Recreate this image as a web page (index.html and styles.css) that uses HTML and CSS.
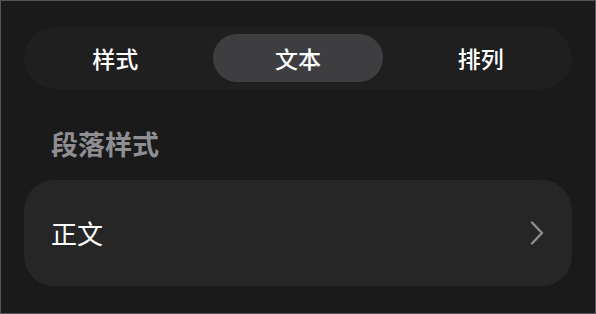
FILE: index.html
```html
<!DOCTYPE html>
<html lang="zh-CN">
<head>
<meta charset="utf-8">
<link rel="stylesheet" href="styles.css">
</head>
<body>
<div class="frame">
  <div class="segmented">
    <div class="tab">样式</div>
    <div class="tab active">文本</div>
    <div class="tab">排列</div>
  </div>
  <div class="section-title">段落样式</div>
  <div class="row">
    <span class="row-label">正文</span>
    <svg class="chevron" width="14" height="24" viewBox="0 0 14 24" aria-hidden="true">
      <path d="M2 1.5 L12 12 L2 22.5" fill="none" stroke="#8e8e93" stroke-width="2.4" stroke-linecap="round" stroke-linejoin="round"/>
    </svg>
  </div>
</div>
</body>
</html>
```
FILE: styles.css
```css
html, body {
  margin: 0;
  padding: 0;
  background: #1a1a1b;
}
.frame {
  box-sizing: border-box;
  width: 596px;
  height: 314px;
  border: 1px solid #555557;
  background: #1a1a1b;
  padding: 26px 23px 0 23px;
  font-family: "Noto Sans CJK SC", "Noto Sans", sans-serif;
  color: #ffffff;
}
.segmented {
  display: grid;
  grid-template-columns: repeat(3, 1fr);
  padding: 7px 0;
  height: 48px;
  border-radius: 31px;
  background: #1f1f20;
}
.tab {
  margin: 0 6px;
  height: 48px;
  border-radius: 24px;
  display: flex;
  align-items: center;
  justify-content: center;
  font-size: 23px;
  font-weight: 500;
  line-height: 1;
  color: #ffffff;
}
.tab.active {
  background: #3e3e40;
}
.section-title {
  margin-top: 41px;
  padding-left: 27px;
  font-size: 27px;
  line-height: 28px;
  font-weight: 600;
  color: #8e8e93;
}
.row {
  margin-top: 22px;
  height: 106px;
  border-radius: 30px;
  background: #262627;
  display: flex;
  align-items: center;
  justify-content: space-between;
  padding: 0 27px 0 27px;
}
.row-label {
  font-size: 26px;
  line-height: 1;
  font-weight: 400;
  color: #ffffff;
}
.chevron {
  display: block;
  margin-right: 1px;
}
```
